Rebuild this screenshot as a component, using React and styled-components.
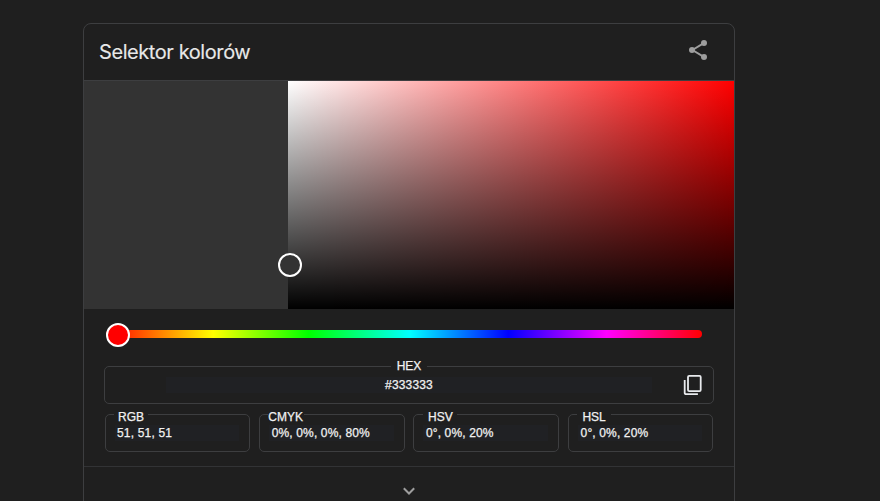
import React from 'react';
import styled, { createGlobalStyle } from 'styled-components';

const GlobalStyle = createGlobalStyle`
  * { box-sizing: border-box; }
  body {
    margin: 0;
    height: 501px;
    overflow: hidden;
    background: #1f1f1f;
    color: #f1f1f1;
    font-family: "Liberation Sans", Arial, sans-serif;
  }
`;

const Page = styled.main`
  height: 501px;
  overflow: hidden;
  padding: 23px 0 0 83px;
`;

const Card = styled.section`
  width: 652px;
  height: 520px;
  border: 1px solid #3d3e40;
  border-radius: 8px;
`;

const Header = styled.header`
  display: flex;
  align-items: center;
  justify-content: space-between;
  height: 57px;
  padding: 0 24px 0 15px;
  border-bottom: 1px solid #3d3e40;
`;

const Title = styled.h1`
  margin: 0;
  color: #e8e8e8;
  font: 400 20px/28px Inter, sans-serif;
  letter-spacing: -0.42px;
  -webkit-text-stroke: 0.12px currentColor;
`;

const IconButton = styled.button`
  display: flex;
  padding: 0;
  border: 0;
  background: none;
  color: ${(p) => p.$color};
`;

const ShareButton = styled(IconButton)`
  margin-top: -5px;
`;

const Picker = styled.div`
  position: relative;
  display: grid;
  grid-template-columns: 204px 1fr;
  height: 228px;
`;

const Swatch = styled.div`
  background: #333333;
`;

const Spectrum = styled.div`
  background:
    linear-gradient(to top, #000, transparent),
    linear-gradient(to right, #fff, #f00);
`;

const Handle = styled.span`
  position: absolute;
  left: ${(p) => p.$x}px;
  top: ${(p) => p.$y}px;
  width: 24px;
  height: 24px;
  border: 2px solid #fff;
  border-radius: 50%;
  background: ${(p) => p.$fill};
`;

const HueTrack = styled.div`
  position: relative;
  height: 8px;
  margin: 21px 32px 28px 22px;
  border-radius: 4px;
  background: linear-gradient(to right, #f00, #ff0 18%, #0f0 34%, #0ff 51%, #00f 67.5%, #f0f 84%, #f00);
`;

const Field = styled.div`
  position: relative;
  display: flex;
  height: 38px;
  border: 1px solid #3d3e40;
  border-radius: 5px;
  font-size: 12px;
  line-height: 14px;
  -webkit-text-stroke: 0.25px currentColor;
`;

const HexField = styled(Field)`
  margin: 0 20px 10px;
  justify-content: center;
`;

const Label = styled.span`
  position: absolute;
  top: ${(p) => p.$top}px;
  left: ${(p) => p.$left}px;
  width: ${(p) => p.$width}px;
  background: #1f1f1f;
  text-align: center;
  font-size: 12px;
  white-space: nowrap;
`;

const Value = styled.span`
  height: 16px;
  margin: 10px 10px 0 9px;
  padding-left: ${(p) => p.$indent}px;
  flex: 1;
  background: #202124;
  line-height: 16px;
  white-space: nowrap;
  letter-spacing: ${(p) => p.$spacing}px;
`;

const HexValue = styled(Value)`
  flex: 0 0 486px;
  margin: 10px 0 0;
  padding: 0;
  text-align: center;
`;

const CopyButton = styled(IconButton)`
  position: absolute;
  right: 11px;
  top: 7px;
`;

const Formats = styled.div`
  display: grid;
  grid-template-columns: 145px 146px 146px 145px;
  column-gap: 8.7px;
  padding-left: 21px;
`;

const Expander = styled.div`
  display: flex;
  justify-content: center;
  margin-top: 14px;
  padding-top: 20px;
  border-top: 1px solid #323335;
`;

const formats = [
  { name: 'RGB', value: '51, 51, 51', left: 8, width: 34, indent: 2, spacing: 0.18 },
  { name: 'CMYK', value: '0%, 0%, 0%, 80%', left: 8, width: 36, indent: 3, spacing: 0.14 },
  { name: 'HSV', value: '0°, 0%, 20%', left: 9, width: 34, indent: 2.5, spacing: 0.14 },
  { name: 'HSL', value: '0°, 0%, 20%', left: 8, width: 34, indent: 2.5, spacing: 0.14 },
];

export default function App() {
  return (
    <Page>
      <GlobalStyle />
      <Card>
        <Header>
          <Title>Selektor kolorów</Title>
          <ShareButton $color="#9e9e9e" aria-label="Udostępnij">
            <svg width="24" height="24" viewBox="0 0 24 24" fill="currentColor">
              <path d="M6.4 12 17.8 5.2M6.4 12l11.4 6.9" stroke="currentColor" strokeWidth="2" />
              <circle cx="6" cy="12" r="3" />
              <circle cx="18" cy="5" r="3" />
              <circle cx="18" cy="19" r="3" />
            </svg>
          </ShareButton>
        </Header>
        <Picker>
          <Swatch />
          <Spectrum />
          <Handle $x={194} $y={172} $fill="#333333" />
        </Picker>
        <HueTrack>
          <Handle $x={0} $y={-7} $fill="#ff0000" />
        </HueTrack>
        <HexField>
          <Label $top={-8} $left={286} $width={36}>HEX</Label>
          <HexValue $spacing={0.15}>#333333</HexValue>
          <CopyButton $color="#e8eaed" aria-label="Kopiuj">
            <svg width="20" height="22" viewBox="0 0 20 22" fill="none" stroke="currentColor" strokeWidth="1.8">
              <rect x="6" y="1.9" width="12.7" height="15.2" rx="1.2" />
              <path d="M2.7 6v12.9a1.2 1.2 0 0 0 1.2 1.2h12" />
            </svg>
          </CopyButton>
        </HexField>
        <Formats>
          {formats.map((f) => (
            <Field key={f.name}>
              <Label $top={-5} $left={f.left} $width={f.width}>{f.name}</Label>
              <Value $indent={f.indent} $spacing={f.spacing}>{f.value}</Value>
            </Field>
          ))}
        </Formats>
        <Expander>
          <svg width="14" height="9" viewBox="0 0 14 9" fill="none" stroke="#9e9e9e" strokeWidth="2">
            <path d="m1.8 1.3 5.2 5.2 5.2-5.2" />
          </svg>
        </Expander>
      </Card>
    </Page>
  );
}
